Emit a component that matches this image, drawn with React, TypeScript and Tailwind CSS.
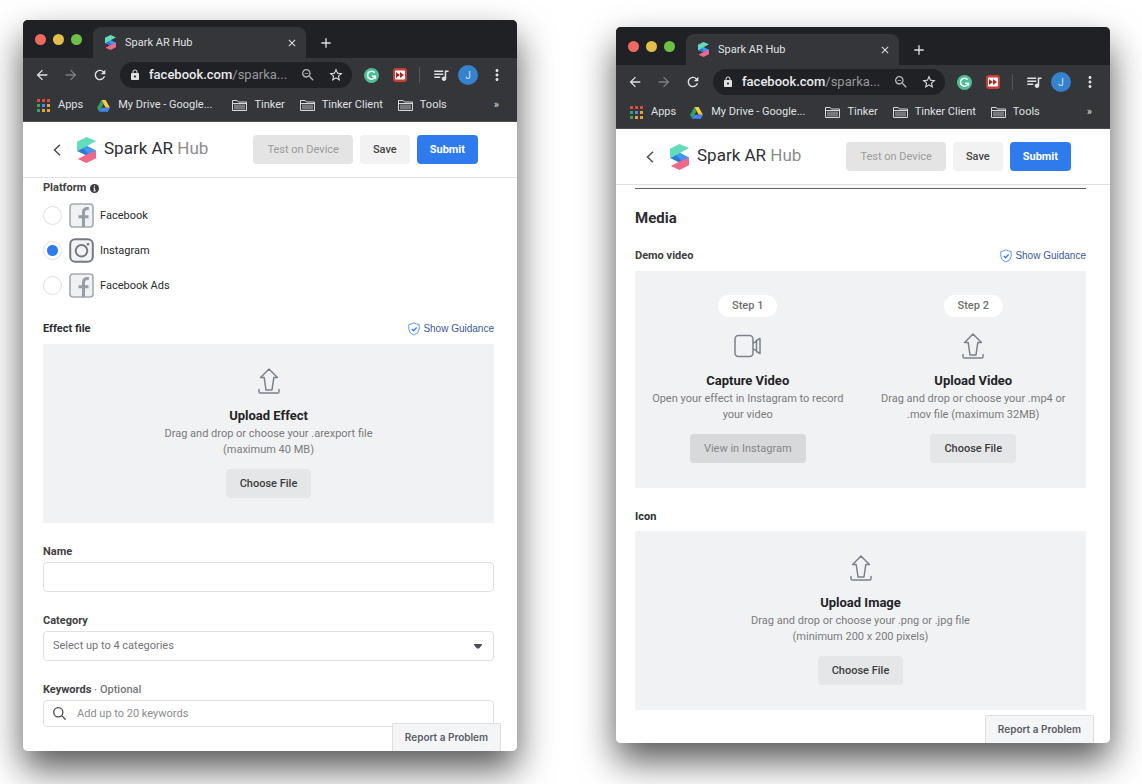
import type { ReactNode } from "react";
import {
    MdAdd,
    MdArrowBack,
    MdArrowForward,
    MdClose,
    MdLock,
    MdMoreVert,
    MdQueueMusic,
    MdRefresh,
    MdStarBorder,
    MdZoomOut,
} from "react-icons/md";

function SparkLogo({ className }: { className: string }) {
    return (
        <svg viewBox="0 0 19 26" className={className} aria-hidden="true">
            <path d="M0 14v-.8L9.5 8.6 19 13.4v1.4L9.5 18.4Z" fill="#3f97f6" />
            <path d="M0 13.6 5.5 10.6l6 6.4-2 1.4Z" fill="#2f78cf" />
            <path d="M0 4.8 9.5 0 19 4 10.5 8.8 0 14.4Z" fill="#62dcbb" />
            <path d="M19 13.6v7.6L9.5 26 .8 22l8.7-4.6Z" fill="#f0678a" />
        </svg>
    );
}

function AppsIcon() {
    const colors = [
        "#e0483e", "#e0483e", "#e0483e",
        "#3fa35b", "#4a8af4", "#e9a13b",
        "#3fa35b", "#e9a13b", "#e9a13b",
    ];
    return (
        <svg viewBox="0 0 13 13" className="size-[13px]" aria-hidden="true">
            {colors.map((color, i) => (
                <rect key={i} x={(i % 3) * 5} y={Math.floor(i / 3) * 5} width="3" height="3" fill={color} />
            ))}
        </svg>
    );
}

function DriveIcon() {
    return (
        <svg viewBox="0 0 26 24" className="h-3 w-[13px]" aria-hidden="true">
            <path d="M9 0 0 15.5 4.5 23.5 13.3 8Z" fill="#34a05b" />
            <path d="M9 0h8.3L26 15.5h-8.6Z" fill="#fbcb43" />
            <path d="M9 15.5h17L21.8 23.5H4.5Z" fill="#4484f3" />
        </svg>
    );
}

function FolderIcon() {
    return (
        <svg viewBox="0 0 15 13" className="h-[13px] w-[15px]" fill="none" stroke="#d6d7d9" aria-hidden="true">
            <path d="M.5 11.5v-10h4.7l1.2 1.5h8.1v8.5Z" />
            <path d="M2 5.5h11v5H2Z" fill="#77787b" stroke="none" />
            <path d="M.5 4.5h14" />
        </svg>
    );
}

function GrammarIcon() {
    return (
        <svg viewBox="0 0 15 15" className="size-[15px]" aria-hidden="true">
            <circle cx="7.5" cy="7.5" r="7.5" fill="#4cbf95" />
            <path d="M10.6 4.6A4 4 0 1 0 11.3 8.5M8 8.2h3.4v2.6" fill="none" stroke="#fff" strokeWidth="1.5" />
        </svg>
    );
}

function SkipIcon() {
    return (
        <svg viewBox="0 0 14 14" className="size-3.5" aria-hidden="true">
            <rect width="14" height="14" rx="3" fill="#c93f35" />
            <rect x="2" y="2.5" width="10" height="9" rx="1" fill="#fff" />
            <path d="M3 4v6l4-3ZM7 4v6l4-3Z" fill="#a92c25" />
        </svg>
    );
}

function UploadIcon() {
    return (
        <svg viewBox="0 0 22 26" className="h-[26px] w-[22px]" fill="none" stroke="#7b828c" strokeWidth="1.5" strokeLinejoin="round" strokeLinecap="round" aria-hidden="true">
            <path d="M11 1 2.6 9.5h3.6L8 22h6l1.8-12.5h3.6Z" />
            <path d="M1 21.5v2.2q0 1.3 1.3 1.3h17.4q1.3 0 1.3-1.3v-2.2" />
        </svg>
    );
}

function VideoIcon() {
    return (
        <svg viewBox="0 0 27 26" className="h-[26px] w-[27px]" fill="none" stroke="#7b828c" strokeWidth="1.5" strokeLinejoin="round" aria-hidden="true">
            <rect x="1" y="2.5" width="18" height="21" rx="3.5" />
            <path d="M19 10.5 22.5 8v10L19 15.5M22.5 7.5l3.5-2v15l-3.5-2Z" />
        </svg>
    );
}

function FacebookIcon() {
    return (
        <svg viewBox="0 0 25 25" className="size-[25px]" fill="none" aria-hidden="true">
            <rect x="1" y="1" width="23" height="23" rx="3" fill="#f0f1f3" stroke="#a4a9b3" strokeWidth="1.6" />
            <path d="M14.5 24V9.5q0-4 4-4h1.3M9.5 13.8h10" stroke="#969ca8" strokeWidth="3" />
        </svg>
    );
}

function InstagramIcon() {
    return (
        <svg viewBox="0 0 25 25" className="size-[25px]" fill="none" stroke="#747984" aria-hidden="true">
            <rect x="1.2" y="1.2" width="22.6" height="22.6" rx="5" strokeWidth="2" fill="#f3f3f5" />
            <circle cx="12.5" cy="12.8" r="5.8" strokeWidth="2" />
            <circle cx="19" cy="6.2" r="1.3" fill="#747984" stroke="none" />
        </svg>
    );
}

function InfoIcon() {
    return (
        <svg viewBox="0 0 9 9" className="size-[9px]" aria-hidden="true">
            <circle cx="4.5" cy="4.5" r="4.5" fill="#3a3b3d" />
            <path d="M4.5 1.5v1.3M3.4 4h1.2v2.8M3.3 6.9h2.5" stroke="#fff" fill="none" />
        </svg>
    );
}

function GuidanceLink() {
    return (
        <a href="#guidance" className="flex items-center gap-[3px] font-['Liberation_Sans',sans-serif] text-[10px] leading-[14px] text-[#3b5998]">
            <svg viewBox="0 0 12 14" className="h-3.5 w-3" fill="none" stroke="#5b9bf3" aria-hidden="true">
                <path d="M6 .8q2.4 1.5 5.2 1.7v4.6q0 4-5.2 6-5.2-2-5.2-6V2.5Q3.6 2.3 6 .8Z" />
                <path d="m3.8 7 1.7 1.7L8.6 5.5" stroke="#2f7bee" strokeWidth="1.3" />
            </svg>
            Show Guidance
        </a>
    );
}

function BrowserChrome() {
    return (
        <div className="border-b border-[#4c4d50] bg-[#35363a] text-[#dfe0e2]">
            <div className="flex h-[38px] items-end bg-[#202124]">
                <div className="flex h-full w-[70px] items-center gap-[7px] pl-3">
                    <span className="size-[11px] rounded-full bg-[#ee6a5e]" />
                    <span className="size-[11px] rounded-full bg-[#e2bf4b]" />
                    <span className="size-[11px] rounded-full bg-[#6fc145]" />
                </div>
                <div className="flex h-[31px] w-[213px] items-center rounded-t-lg bg-[#35363a] pr-2 pl-3">
                    <SparkLogo className="h-[15px] w-[11px]" />
                    <span className="ml-[9px] flex-1 pt-px text-[11px]">Spark AR Hub</span>
                    <button type="button" aria-label="Close tab">
                        <MdClose className="size-3" />
                    </button>
                </div>
                <button type="button" aria-label="New tab" className="flex h-[31px] items-center pl-3">
                    <MdAdd className="size-4" />
                </button>
            </div>

            <div className="flex h-[34px] items-center pr-[11px] pl-[11px]">
                <div className="flex shrink-0 items-center gap-[13px]">
                    <button type="button" aria-label="Back"><MdArrowBack className="size-4" /></button>
                    <button type="button" aria-label="Forward"><MdArrowForward className="size-4 text-[#7d7e82]" /></button>
                    <button type="button" aria-label="Reload"><MdRefresh className="size-4" /></button>
                </div>
                <div className="ml-3 flex h-[26px] min-w-0 flex-1 items-center rounded-full bg-[#202124] pr-2 pl-[9px]">
                    <MdLock className="size-3 shrink-0" />
                    <span className="ml-2 flex-1 truncate text-[13px] text-[#96989b]">
                        <span className="font-medium text-[#e8eaed]">facebook.com</span>/sparka...
                    </span>
                    <button type="button" aria-label="Zoom"><MdZoomOut className="size-4 text-[#b4b6b9]" /></button>
                    <button type="button" aria-label="Bookmark" className="ml-3"><MdStarBorder className="size-4" /></button>
                </div>
                <div className="flex shrink-0 items-center pl-3">
                    <button type="button" aria-label="Writing assistant"><GrammarIcon /></button>
                    <button type="button" aria-label="Skip" className="ml-3.5"><SkipIcon /></button>
                    <span className="mr-3 ml-3 h-4 w-px bg-[#56575b]" />
                    <button type="button" aria-label="Media queue"><MdQueueMusic className="size-[18px]" /></button>
                    <button type="button" aria-label="Profile" className="ml-2 flex size-5 items-center justify-center rounded-full bg-[#3583ce] text-[10px]">J</button>
                    <button type="button" aria-label="Menu" className="ml-2.5"><MdMoreVert className="size-[18px]" /></button>
                </div>
            </div>

            <nav className="flex h-[29px] items-center pb-0.5 pl-3.5 text-[11px] whitespace-nowrap">
                <a href="#apps" className="flex items-center gap-2"><AppsIcon />Apps</a>
                <a href="#drive" className="ml-3.5 flex items-center gap-2"><DriveIcon />My Drive - Google...</a>
                <a href="#tinker" className="ml-5 flex items-center gap-[7px]"><FolderIcon />Tinker</a>
                <a href="#client" className="ml-[15px] flex items-center gap-[7px]"><FolderIcon />Tinker Client</a>
                <a href="#tools" className="ml-[15px] flex items-center gap-[7px]"><FolderIcon />Tools</a>
                <button type="button" aria-label="More bookmarks" className="mr-[18px] ml-auto">»</button>
            </nav>
        </div>
    );
}

function HubHeader() {
    return (
        <header className="flex h-14 items-center border-b border-[#e0e0e0] pr-[39px] pl-[30px]">
            <button type="button" aria-label="Go back">
                <svg viewBox="0 0 8 12" className="h-3 w-2" fill="none" stroke="#4c4d50" strokeWidth="1.5" aria-hidden="true">
                    <path d="M7 .8 1.5 6 7 11.2" />
                </svg>
            </button>
            <SparkLogo className="ml-4 h-[26px] w-[19px]" />
            <span className="ml-2 flex-1 pb-0.5 text-[17px] whitespace-nowrap text-[#2f3032]">
                Spark AR <span className="text-[#8c8c8e]">Hub</span>
            </span>
            <div className="flex gap-[7px] text-[11px]">
                <button type="button" disabled className="h-[29px] rounded-[4px] bg-[#e4e4e4] px-3.5 pt-0.5 text-[#9b9b9b]">Test on Device</button>
                <button type="button" className="h-[29px] rounded-[4px] bg-[#f2f2f2] px-[13px] pt-0.5 font-medium text-[#444]">Save</button>
                <button type="button" className="h-[29px] rounded-[4px] bg-[#2f7bee] px-[13px] pt-0.5 font-bold text-white">Submit</button>
            </div>
        </header>
    );
}

function BrowserWindow({ className, children }: { className: string; children: ReactNode }) {
    return (
        <section className={`rounded-[5px] shadow-[0_18px_36px_rgba(0,0,0,0.66)] ${className}`}>
            <div className="relative overflow-hidden rounded-[5px] bg-white">
                <BrowserChrome />
                <HubHeader />
                {children}
                <button type="button" className="absolute right-4 bottom-0 h-7 rounded-t-[2px] border border-b-0 border-[#dcdee2] bg-[#f4f5f7] px-3 font-[Inter,sans-serif] text-[10px] font-semibold text-[#5a5d66]">
                    Report a Problem
                </button>
            </div>
        </section>
    );
}

type UploadCardProps = {
    step?: string;
    icon: ReactNode;
    title: string;
    text: string;
    action: string;
    disabled?: boolean;
};

function UploadCard({ step, icon, title, text, action, disabled }: UploadCardProps) {
    return (
        <div className="flex flex-1 flex-col items-center bg-[#f1f2f4] px-3 pt-6 pb-[25px] text-center">
            {step && (
                <span className="mb-4 rounded-full bg-white px-3.5 text-[11px] leading-[22px] font-medium text-[#6f6f6f]">{step}</span>
            )}
            {icon}
            <h3 className="mt-3 text-[13px] leading-5 font-bold text-[#232426]">{title}</h3>
            <p className="max-w-[240px] text-[11px] leading-4 text-[#7b7b7d]">{text}</p>
            <button
                type="button"
                disabled={disabled}
                className="mt-[11px] h-[29px] rounded-[4px] bg-[#e5e6e8] px-3.5 pt-0.5 text-[11px] font-medium text-[#3c3d3f] disabled:bg-[#d8d9db] disabled:font-normal disabled:text-[#858688]"
            >
                {action}
            </button>
        </div>
    );
}

const platforms = [
    { name: "Facebook", icon: <FacebookIcon /> },
    { name: "Instagram", icon: <InstagramIcon /> },
    { name: "Facebook Ads", icon: <FacebookIcon /> },
];

function EffectForm() {
    return (
        <form className="pt-0.5 pr-[23px] pb-6 pl-5 text-[11px]">
            <fieldset>
                <legend className="flex items-center gap-1 leading-4 font-bold text-[#3f4042]">
                    Platform <InfoIcon />
                </legend>
                <div className="pt-0.5">
                    {platforms.map((p) => (
                        <label key={p.name} className="flex h-[35px] items-center text-[#28292b]">
                            <input
                                type="radio"
                                name="platform"
                                defaultChecked={p.name === "Instagram"}
                                className="mr-[7px] size-[19px] appearance-none rounded-full border border-[#dfe0e2] bg-white checked:bg-[radial-gradient(circle,#2f7bee_5px,white_6px)]"
                            />
                            {p.icon}
                            <span className="ml-1.5 pt-px">{p.name}</span>
                        </label>
                    ))}
                </div>
            </fieldset>

            <div className="mt-[18px] mb-[7px] flex items-center justify-between">
                <h2 className="leading-4 font-bold text-[#2c2d2f]">Effect file</h2>
                <GuidanceLink />
            </div>
            <UploadCard
                icon={<UploadIcon />}
                title="Upload Effect"
                text="Drag and drop or choose your .arexport file (maximum 40 MB)"
                action="Choose File"
            />

            <label htmlFor="name" className="mt-[21px] block leading-4 font-bold text-[#3f4042]">Name</label>
            <input id="name" type="text" className="mt-0.5 block h-[30px] w-full rounded-[4px] border border-[#dfe0e2] px-2.5" />

            <label htmlFor="category" className="mt-[21px] block leading-4 font-bold text-[#3f4042]">Category</label>
            <div className="relative mt-0.5">
                <select id="category" className="block h-[30px] w-full appearance-none rounded-[4px] border border-[#dfe0e2] bg-white px-[9px] pt-px text-[#737476]">
                    <option>Select up to 4 categories</option>
                </select>
                <svg viewBox="0 0 8 5" className="pointer-events-none absolute top-[13px] right-3 h-[5px] w-2" aria-hidden="true">
                    <path d="M0 0h8v1L5 4.6H3L0 1Z" fill="#4b4f58" />
                </svg>
            </div>

            <label htmlFor="keywords" className="mt-[21px] block leading-4 font-bold text-[#3f4042]">
                Keywords <span className="font-medium text-[#77787a]">· Optional</span>
            </label>
            <div className="mt-0.5 flex h-[27px] items-center rounded-[4px] border border-[#dfe0e2] px-[9px]">
                <svg viewBox="0 0 13 13" className="size-[13px]" fill="none" stroke="#4a4b4e" strokeWidth="1.3" aria-hidden="true">
                    <circle cx="5.3" cy="5.3" r="4.6" />
                    <path d="m8.6 8.6 4 4" />
                </svg>
                <input id="keywords" type="text" placeholder="Add up to 20 keywords" className="ml-[11px] flex-1 pt-px outline-none placeholder:text-[#8c8d8f]" />
            </div>
        </form>
    );
}

function MediaForm() {
    return (
        <div className="pt-[3px] pr-6 pb-[33px] pl-[19px]">
            <hr className="border-[#5f6062]" />
            <h1 className="mt-[19px] text-[15px] leading-5 font-bold text-[#2c2d2f]">Media</h1>
            <div className="mt-5 mb-[7px] flex items-center justify-between">
                <h2 className="text-[11px] leading-4 font-bold text-[#3f4042]">Demo video</h2>
                <GuidanceLink />
            </div>
            <div className="grid grid-cols-2">
                <UploadCard
                    step="Step 1"
                    icon={<VideoIcon />}
                    title="Capture Video"
                    text="Open your effect in Instagram to record your video"
                    action="View in Instagram"
                    disabled
                />
                <UploadCard
                    step="Step 2"
                    icon={<UploadIcon />}
                    title="Upload Video"
                    text="Drag and drop or choose your .mp4 or .mov file (maximum 32MB)"
                    action="Choose File"
                />
            </div>
            <h2 className="mt-[21px] mb-1.5 text-[11px] leading-4 font-bold text-[#2c2d2f]">Icon</h2>
            <UploadCard
                icon={<UploadIcon />}
                title="Upload Image"
                text="Drag and drop or choose your .png or .jpg file (minimum 200 x 200 pixels)"
                action="Choose File"
            />
        </div>
    );
}

export default function App() {
    return (
        <main className="grid min-h-screen grid-cols-1 items-start gap-x-[99px] gap-y-16 overflow-hidden bg-white pr-8 pl-[23px] font-[Roboto,sans-serif] lg:grid-cols-2">
            <BrowserWindow className="mt-5">
                <EffectForm />
            </BrowserWindow>
            <BrowserWindow className="mt-[27px]">
                <MediaForm />
            </BrowserWindow>
        </main>
    );
}
